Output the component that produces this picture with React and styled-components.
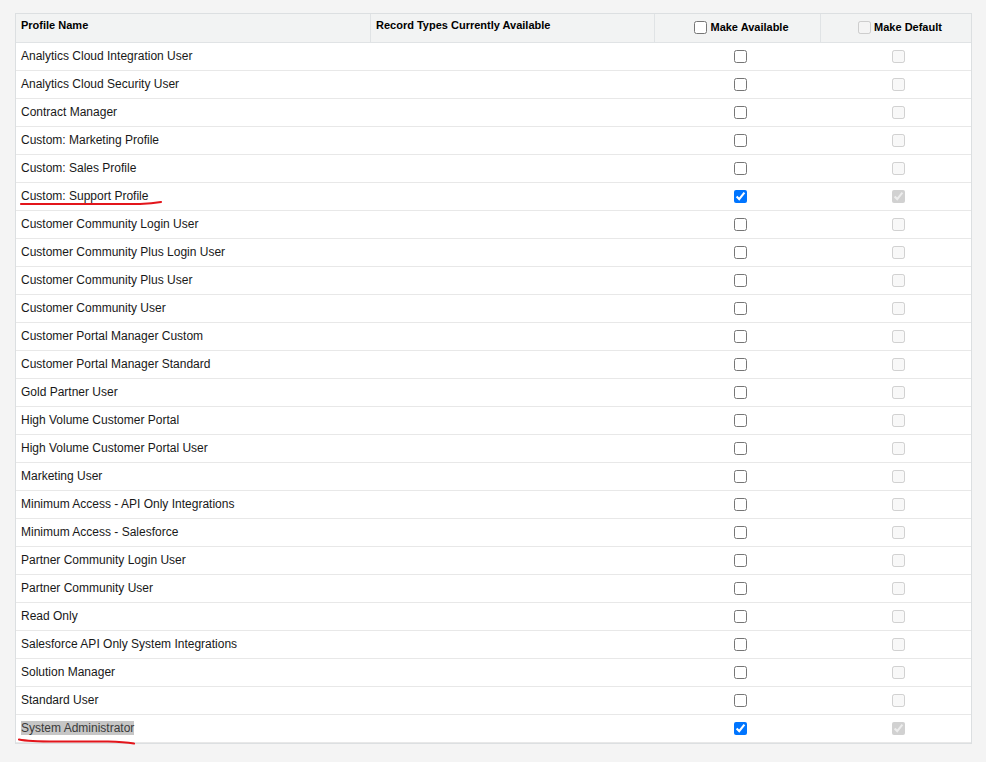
import styled, { createGlobalStyle } from "styled-components";

const profiles = [
  "Analytics Cloud Integration User",
  "Analytics Cloud Security User",
  "Contract Manager",
  "Custom: Marketing Profile",
  "Custom: Sales Profile",
  "Custom: Support Profile",
  "Customer Community Login User",
  "Customer Community Plus Login User",
  "Customer Community Plus User",
  "Customer Community User",
  "Customer Portal Manager Custom",
  "Customer Portal Manager Standard",
  "Gold Partner User",
  "High Volume Customer Portal",
  "High Volume Customer Portal User",
  "Marketing User",
  "Minimum Access - API Only Integrations",
  "Minimum Access - Salesforce",
  "Partner Community Login User",
  "Partner Community User",
  "Read Only",
  "Salesforce API Only System Integrations",
  "Solution Manager",
  "Standard User",
  "System Administrator",
];

const checked = ["Custom: Support Profile", "System Administrator"];

const GlobalStyle = createGlobalStyle`
  body {
    margin: 0;
    background: #f4f4f4;
    font-family: "Liberation Sans", Arial, sans-serif;
  }
`;

const Page = styled.div`
  padding: 13px 0 0 15px;
  height: 762px;
  box-sizing: border-box;
`;

const Table = styled.div`
  width: 957px;
  box-sizing: border-box;
  background: #fff;
  border: 1px solid #dcdfe1;
`;

const Row = styled.div`
  display: grid;
  grid-template-columns: 355px 284px 166px 150px;
  height: ${({ head }) => (head ? 28 : 27)}px;
  background: ${({ head }) => (head ? "#f2f3f3" : "#fff")};
  border-bottom: 1px solid ${({ head }) => (head ? "#e0e3e5" : "#e8e8e8")};
`;

const HeadCell = styled.div`
  box-sizing: border-box;
  padding: ${({ center }) => (center ? "4px 2px 4px 6px" : "5px 2px 4px 5px")};
  font-size: 11px;
  font-weight: bold;
  color: #000;
  text-align: ${({ center }) => (center ? "center" : "left")};
  border-right: ${({ last }) => (last ? "none" : "1px solid #e0e3e5")};
  white-space: nowrap;

  input {
    vertical-align: -3px;
  }
`;

const Cell = styled.div`
  position: relative;
  box-sizing: border-box;
  padding: ${({ center }) => (center ? "0 2px 0 5px" : "0 2px 2px 5px")};
  display: flex;
  align-items: center;
  justify-content: ${({ center }) => (center ? "center" : "flex-start")};
  font-size: 12px;
  color: #181818;
  white-space: nowrap;
`;

const Box = styled.input.attrs({ type: "checkbox" })`
  margin: 3px 3px 3px 4px;
  width: 13px;
  height: 13px;
`;

const Selected = styled.span`
  background: #c6c6c6;
  color: #3a3a3a;
  line-height: 14px;
`;

const Scribble = styled.svg`
  position: absolute;
  left: 0;
  top: 0;
  overflow: visible;
  pointer-events: none;
`;

function Underline({ d }) {
  return (
    <Scribble width="200" height="30">
      <path d={d} fill="none" stroke="#e3151b" strokeWidth="2.2" strokeLinecap="round" />
    </Scribble>
  );
}

export default function App() {
  return (
    <Page>
      <GlobalStyle />
      <Table>
        <Row head>
          <HeadCell>Profile Name</HeadCell>
          <HeadCell>Record Types Currently Available</HeadCell>
          <HeadCell center>
            <Box readOnly />
            Make Available
          </HeadCell>
          <HeadCell center last>
            <Box disabled />
            Make Default
          </HeadCell>
        </Row>
        {profiles.map((name) => {
          const on = checked.includes(name);
          return (
            <Row key={name}>
              <Cell>
                {name === "System Administrator" ? <Selected>{name}</Selected> : name}
                {name === "Custom: Support Profile" && (
                  <Underline d="M5 21 L124 21 Q136 20.6 145 19" />
                )}
                {name === "System Administrator" && (
                  <Underline d="M3 24.5 Q12 26.5 40 26.5 L92 26.5 Q108 27 118 28.5" />
                )}
              </Cell>
              <Cell />
              <Cell center>
                <Box defaultChecked={on} />
              </Cell>
              <Cell center>
                <Box disabled checked={on} readOnly />
              </Cell>
            </Row>
          );
        })}
      </Table>
    </Page>
  );
}
